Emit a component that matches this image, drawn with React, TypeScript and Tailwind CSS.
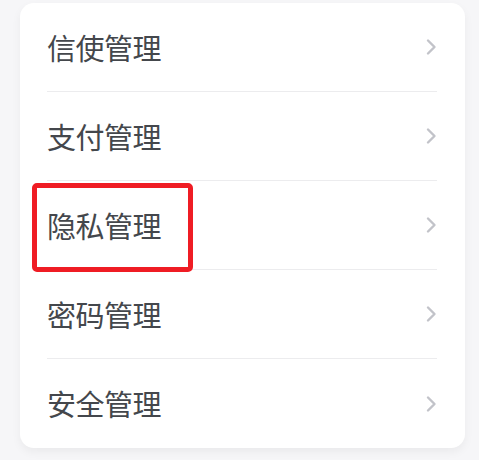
import React from "react";

const items = ["信使管理", "支付管理", "隐私管理", "密码管理", "安全管理"];

const Chevron = () => (
  <svg width="12" height="18" viewBox="0 0 12 18" fill="none">
    <path d="M3 2.5 L9.5 9 L3 15.5" stroke="#c2c3c9" strokeWidth="2.4" strokeLinecap="round" strokeLinejoin="round" />
  </svg>
);

const App = () => {
  return (
    <div className="w-[479px] h-[460px] bg-[#f6f6f8] pt-[3px] px-[14px] font-['Noto_Sans_CJK_SC',sans-serif]">
      <div className="relative ml-[6px] w-[445px] bg-white rounded-[14px] shadow-[0_4px_10px_rgba(0,0,0,0.05)] pl-[27px] pr-[28px]">
        {items.map((label, i) => (
          <div
            key={label}
            className={`flex items-center justify-between h-[89px] ${i < items.length - 1 ? "border-b border-[#ececee]" : "h-[88px]"}`}
          >
            <span className="text-[29px] text-[#44474c] leading-none tracking-[-0.5px]">{label}</span>
            <Chevron />
          </div>
        ))}
        <div className="absolute left-[12px] top-[180px] w-[161px] h-[89px] border-[5px] border-[#ef1c24] rounded-[5px]" />
      </div>
    </div>
  );
};

export default App;
